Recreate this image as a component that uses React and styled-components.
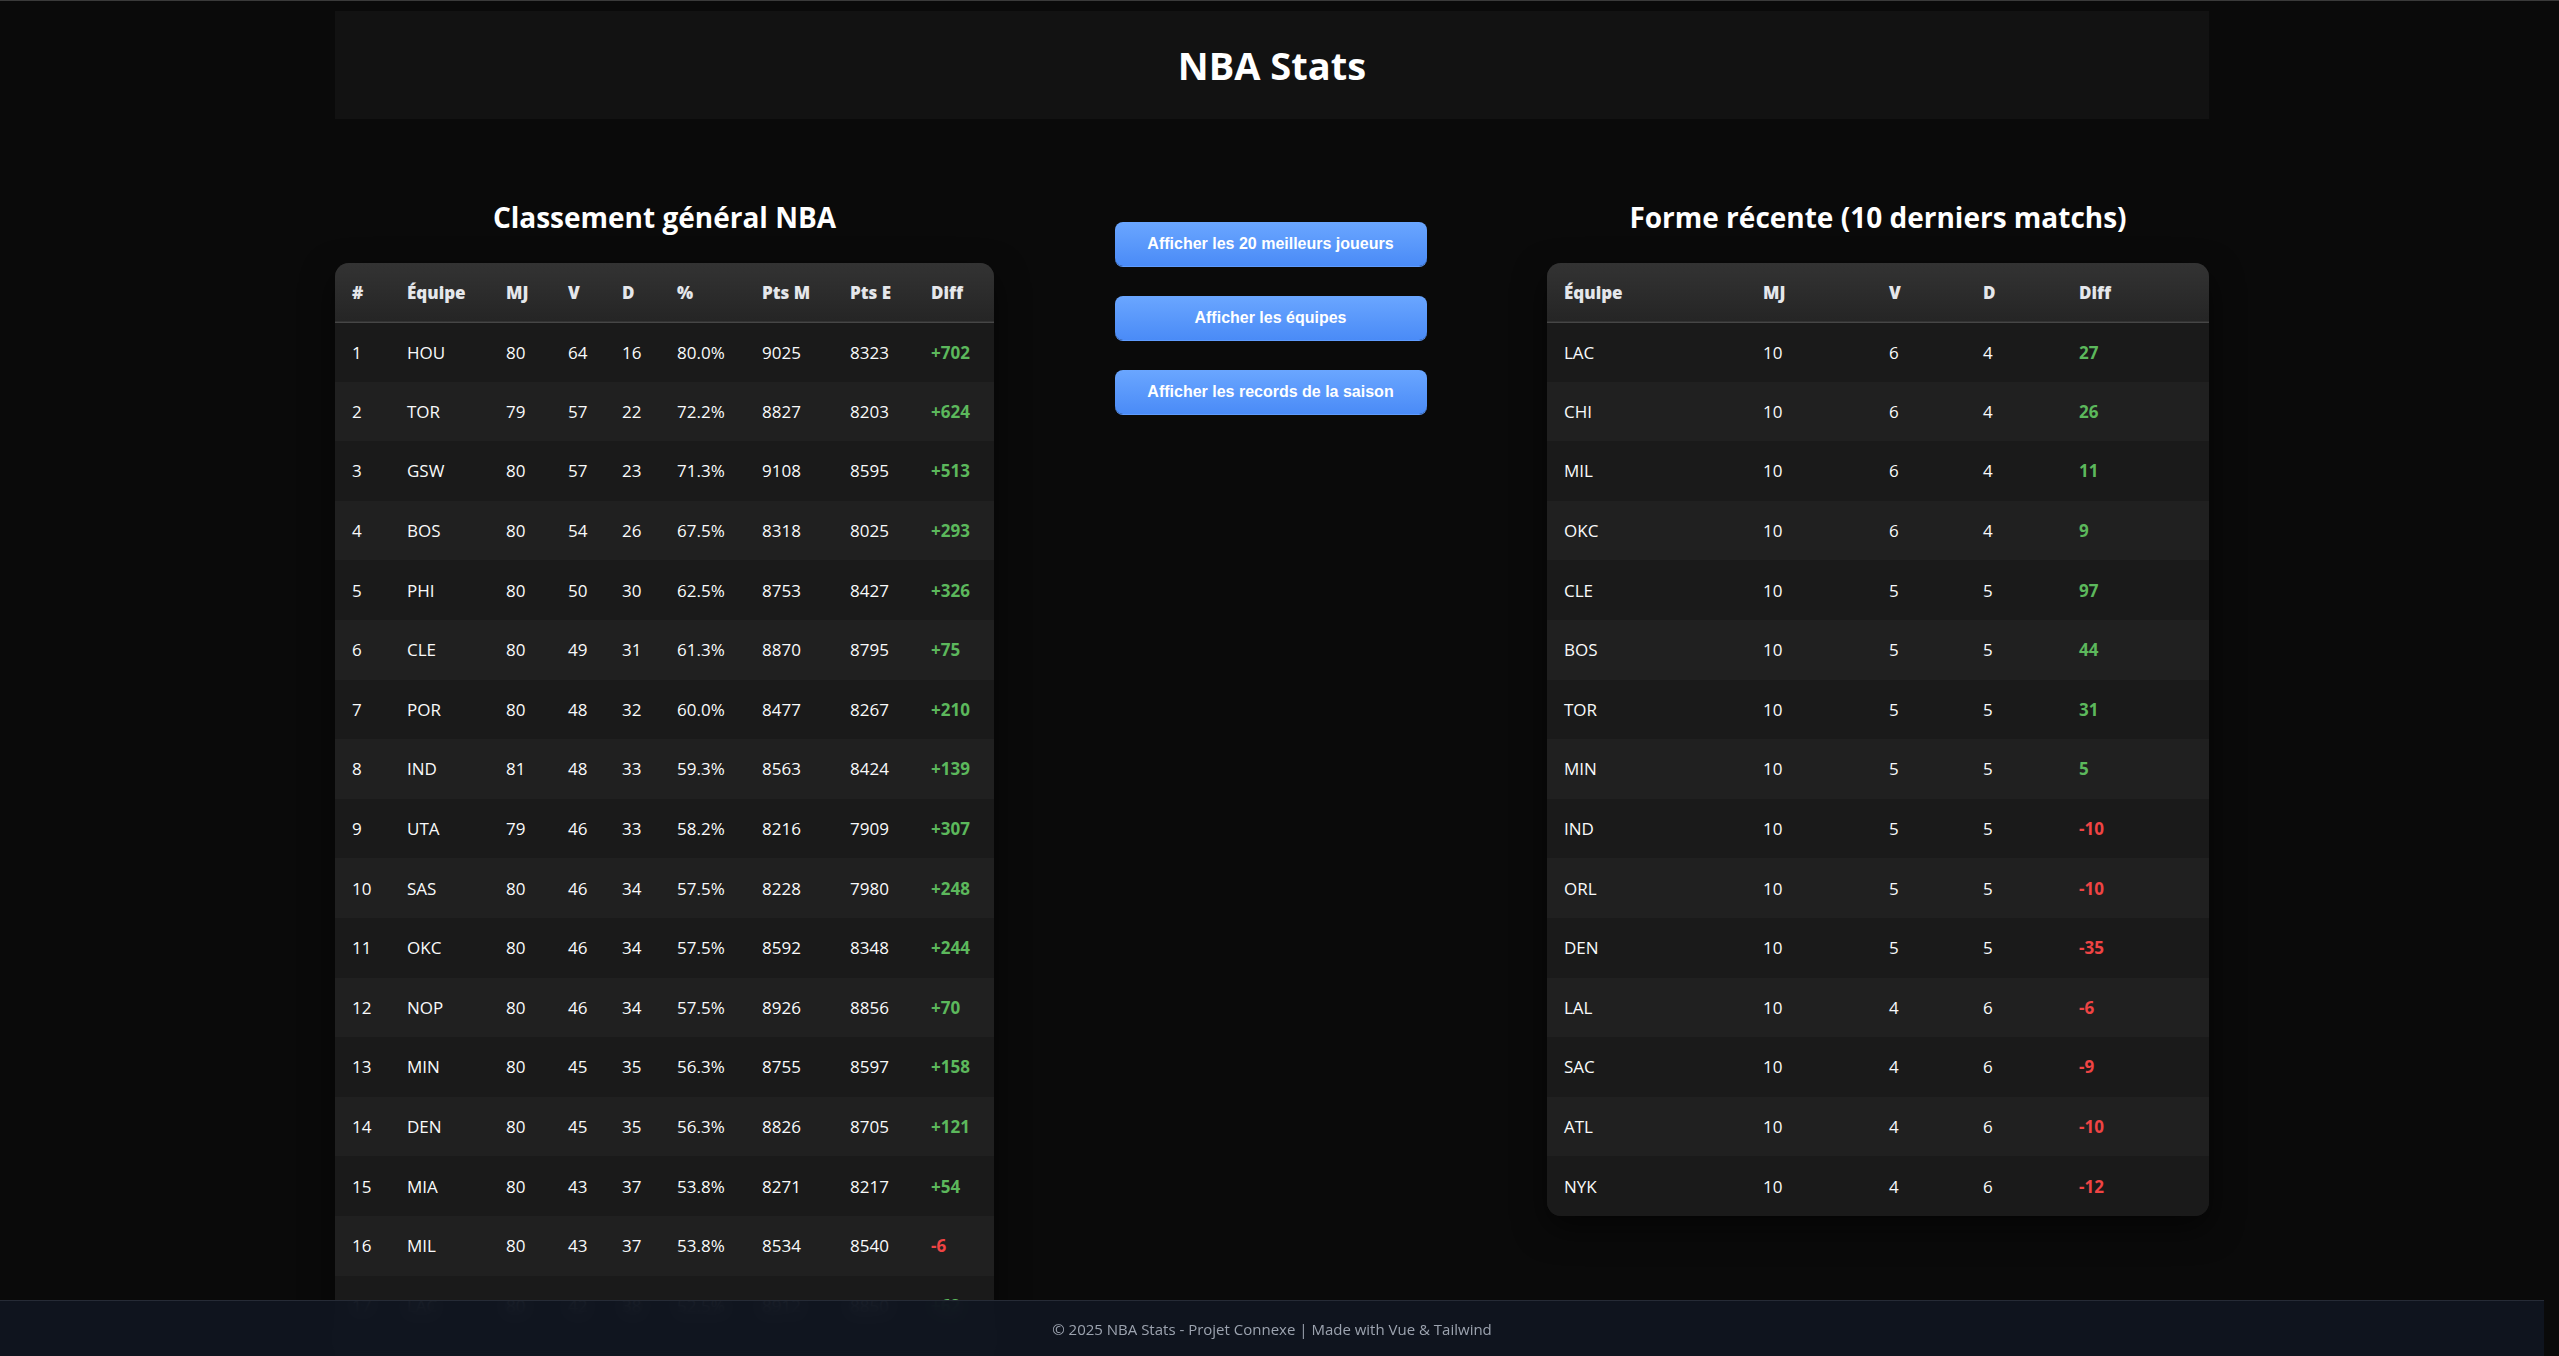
import styled, { createGlobalStyle } from 'styled-components';

const standings = [
  [1, 'HOU', 80, 64, 16, '80.0%', 9025, 8323, 702],
  [2, 'TOR', 79, 57, 22, '72.2%', 8827, 8203, 624],
  [3, 'GSW', 80, 57, 23, '71.3%', 9108, 8595, 513],
  [4, 'BOS', 80, 54, 26, '67.5%', 8318, 8025, 293],
  [5, 'PHI', 80, 50, 30, '62.5%', 8753, 8427, 326],
  [6, 'CLE', 80, 49, 31, '61.3%', 8870, 8795, 75],
  [7, 'POR', 80, 48, 32, '60.0%', 8477, 8267, 210],
  [8, 'IND', 81, 48, 33, '59.3%', 8563, 8424, 139],
  [9, 'UTA', 79, 46, 33, '58.2%', 8216, 7909, 307],
  [10, 'SAS', 80, 46, 34, '57.5%', 8228, 7980, 248],
  [11, 'OKC', 80, 46, 34, '57.5%', 8592, 8348, 244],
  [12, 'NOP', 80, 46, 34, '57.5%', 8926, 8856, 70],
  [13, 'MIN', 80, 45, 35, '56.3%', 8755, 8597, 158],
  [14, 'DEN', 80, 45, 35, '56.3%', 8826, 8705, 121],
  [15, 'MIA', 80, 43, 37, '53.8%', 8271, 8217, 54],
  [16, 'MIL', 80, 43, 37, '53.8%', 8534, 8540, -6],
  [17, 'LAC', 80, 42, 38, '52.5%', 8912, 8850, 62],
  [18, 'WAS', 80, 41, 39, '51.3%', 8700, 8620, 80],
  [19, 'DET', 80, 38, 42, '47.5%', 8324, 8321, 3],
  [20, 'CHA', 80, 36, 44, '45.0%', 8690, 8699, -9],
  [21, 'LAL', 80, 35, 45, '43.8%', 8802, 8901, -99],
  [22, 'SAC', 80, 34, 46, '42.5%', 8101, 8433, -332],
  [23, 'ORL', 80, 33, 47, '41.3%', 8222, 8490, -268],
  [24, 'DAL', 80, 31, 49, '38.8%', 8195, 8290, -95],
  [25, 'NYK', 80, 29, 51, '36.3%', 8350, 8611, -261],
  [26, 'BKN', 80, 27, 53, '33.8%', 8532, 8870, -338],
  [27, 'CHI', 80, 26, 54, '32.5%', 8261, 8760, -499],
  [28, 'MEM', 80, 24, 56, '30.0%', 7921, 8402, -481],
  [29, 'ATL', 80, 23, 57, '28.8%', 8240, 8744, -504],
  [30, 'PHX', 80, 21, 59, '26.3%', 8352, 9070, -718],
];

const recent = [
  ['LAC', 10, 6, 4, 27],
  ['CHI', 10, 6, 4, 26],
  ['MIL', 10, 6, 4, 11],
  ['OKC', 10, 6, 4, 9],
  ['CLE', 10, 5, 5, 97],
  ['BOS', 10, 5, 5, 44],
  ['TOR', 10, 5, 5, 31],
  ['MIN', 10, 5, 5, 5],
  ['IND', 10, 5, 5, -10],
  ['ORL', 10, 5, 5, -10],
  ['DEN', 10, 5, 5, -35],
  ['LAL', 10, 4, 6, -6],
  ['SAC', 10, 4, 6, -9],
  ['ATL', 10, 4, 6, -10],
  ['NYK', 10, 4, 6, -12],
];

const standingCols = [
  ['#', 55],
  ['Équipe', 99],
  ['MJ', 62],
  ['V', 54],
  ['D', 55],
  ['%', 85],
  ['Pts M', 88],
  ['Pts E', 81],
  ['Diff', 80],
];

const recentCols = [
  ['Équipe', 199],
  ['MJ', 126],
  ['V', 94],
  ['D', 96],
  ['Diff', 147],
];

const App = () => {
  return (
    <>
      <GlobalStyle />
      <Container>
        <Header>
          <h1>NBA Stats</h1>
        </Header>
        <Main>
          <Section>
            <SectionTitle>Classement général NBA</SectionTitle>
            <TableCard>
              <Table>
                <thead>
                  <tr>
                    {standingCols.map(([label, w]) => (
                      <Th key={label} $w={w}>
                        {label}
                      </Th>
                    ))}
                  </tr>
                </thead>
                <tbody>
                  {standings.map(row => (
                    <tr key={row[0]}>
                      {row.slice(0, 8).map((cell, i) => (
                        <Td key={i}>{cell}</Td>
                      ))}
                      <DiffCell $positive={row[8] >= 0}>
                        {row[8] >= 0 ? `+${row[8]}` : row[8]}
                      </DiffCell>
                    </tr>
                  ))}
                </tbody>
              </Table>
            </TableCard>
          </Section>

          <Actions>
            <ActionButton>Afficher les 20 meilleurs joueurs</ActionButton>
            <ActionButton>Afficher les équipes</ActionButton>
            <ActionButton>Afficher les records de la saison</ActionButton>
          </Actions>

          <Section>
            <SectionTitle>Forme récente (10 derniers matchs)</SectionTitle>
            <TableCard>
              <Table>
                <thead>
                  <tr>
                    {recentCols.map(([label, w]) => (
                      <Th key={label} $w={w}>
                        {label}
                      </Th>
                    ))}
                  </tr>
                </thead>
                <tbody>
                  {recent.map(row => (
                    <tr key={row[0]}>
                      {row.slice(0, 4).map((cell, i) => (
                        <Td key={i}>{cell}</Td>
                      ))}
                      <DiffCell $positive={row[4] >= 0}>{row[4]}</DiffCell>
                    </tr>
                  ))}
                </tbody>
              </Table>
            </TableCard>
          </Section>
        </Main>
      </Container>
      <Footer>© 2025 NBA Stats - Projet Connexe | Made with Vue &amp; Tailwind</Footer>
    </>
  );
};

const GlobalStyle = createGlobalStyle`
  :root {
    color-scheme: dark;
  }
  * {
    box-sizing: border-box;
  }
  body {
    margin: 0;
    padding-right: 15px;
    background: #0a0a0a;
    color: #f3f4f6;
    font-family: 'Open Sans', 'Noto Sans', sans-serif;
    border-top: 1px solid #3a3a3a;
  }
`;

const Container = styled.div`
  max-width: 1874px;
  margin: 0 auto;
  padding: 10px 0 64px;
`;

const Header = styled.header`
  display: flex;
  align-items: center;
  justify-content: center;
  height: 108px;
  background: #121212;

  h1 {
    margin: 0;
    font-size: 38px;
    font-weight: 700;
    color: #ffffff;
  }
`;

const Main = styled.main`
  display: grid;
  grid-template-columns: 659px 1fr 662px;
  align-items: start;
  padding-top: 80px;
`;

const Section = styled.section`
  display: flex;
  flex-direction: column;
  align-items: center;
`;

const SectionTitle = styled.h2`
  margin: 0 0 28px;
  font-size: 28px;
  line-height: 36px;
  font-weight: 700;
  color: #ffffff;
`;

const TableCard = styled.div`
  width: 100%;
  border-radius: 14px;
  overflow: hidden;
  background: #1a1a1a;
  box-shadow: 0 12px 32px rgba(0, 0, 0, 0.55);
`;

const Table = styled.table`
  width: 100%;
  border-collapse: collapse;
  table-layout: fixed;

  thead tr {
    background: linear-gradient(180deg, #333333, #252525);
    border-bottom: 1px solid #464646;
  }
  tbody tr:nth-child(odd) {
    background: #1a1a1a;
  }
  tbody tr:nth-child(even) {
    background: #202020;
  }
`;

const Th = styled.th`
  width: ${p => p.$w}px;
  height: 59px;
  padding: 0 17px;
  text-align: left;
  font-size: 17px;
  font-weight: 800;
  color: #e5e7eb;
`;

const Td = styled.td`
  height: 59.6px;
  padding: 0 17px;
  font-size: 17px;
  color: #f9fafb;
  white-space: nowrap;
`;

const DiffCell = styled(Td)`
  font-weight: 700;
  color: ${p => (p.$positive ? '#5cb85c' : '#ef4444')};
`;

const Actions = styled.div`
  display: flex;
  flex-direction: column;
  align-items: center;
  gap: 30px;
  padding-top: 23px;
`;

const ActionButton = styled.button`
  width: 312px;
  height: 44px;
  border: none;
  border-radius: 8px;
  background: linear-gradient(180deg, #6aa6ff, #4a8bf7);
  box-shadow: 0 1px 0 #5f9cff;
  color: #ffffff;
  font-family: 'Liberation Sans', Arial, sans-serif;
  font-size: 16px;
  font-weight: 700;
  cursor: pointer;
`;

const Footer = styled.footer`
  position: fixed;
  left: 0;
  right: 15px;
  bottom: 0;
  height: 56px;
  display: flex;
  align-items: center;
  justify-content: center;
  background: rgba(16, 21, 32, 0.94);
  backdrop-filter: blur(8px);
  border-top: 1px solid #262b36;
  color: #9ca3af;
  font-size: 15px;
`;

export default App;
